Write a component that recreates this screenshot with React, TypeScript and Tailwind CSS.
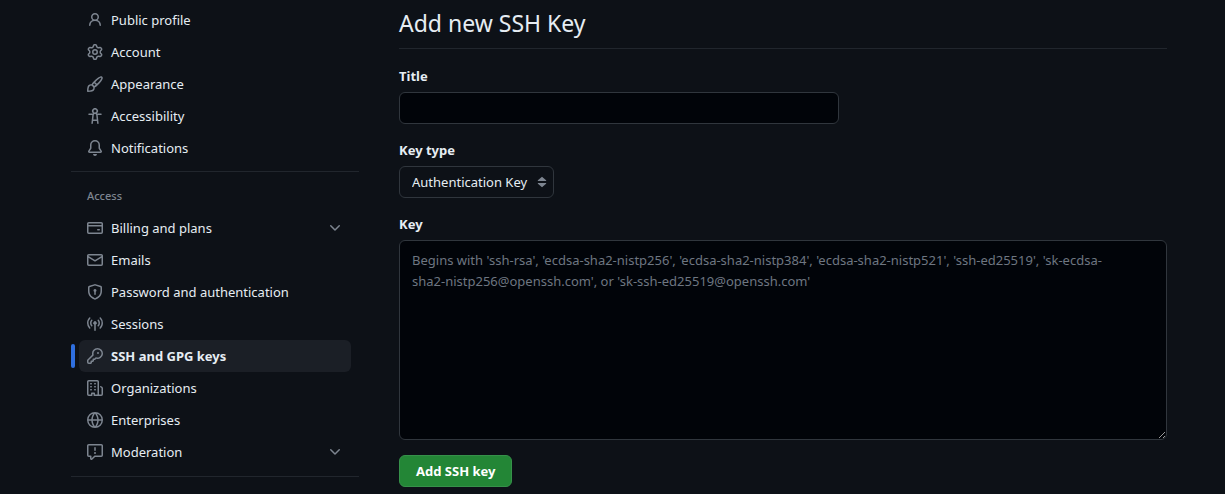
import type { ReactNode } from "react";

const paths = {
  person:
    "M10.561 8.073a6.005 6.005 0 0 1 3.432 5.142.75.75 0 1 1-1.498.07 4.5 4.5 0 0 0-8.99 0 .75.75 0 0 1-1.498-.07 6.004 6.004 0 0 1 3.431-5.142 3.999 3.999 0 1 1 5.123 0ZM10.5 5a2.5 2.5 0 1 0-5 0 2.5 2.5 0 0 0 5 0Z",
  gear:
    "M8 0a8.2 8.2 0 0 1 .701.031C9.444.095 9.99.645 10.16 1.29l.288 1.107c.018.066.079.158.212.224.231.114.454.243.668.386.123.082.233.09.299.071l1.103-.303c.644-.176 1.392.021 1.82.63.27.385.506.792.704 1.218.315.675.111 1.422-.364 1.891l-.814.806c-.049.048-.098.147-.088.294.016.257.016.515 0 .772-.01.147.038.246.088.294l.814.806c.475.469.679 1.216.364 1.891a7.977 7.977 0 0 1-.704 1.217c-.428.61-1.176.807-1.82.63l-1.102-.302c-.067-.019-.177-.011-.3.071a5.909 5.909 0 0 1-.668.386c-.133.066-.194.158-.211.224l-.29 1.106c-.168.646-.715 1.196-1.458 1.26a8.006 8.006 0 0 1-1.402 0c-.743-.064-1.289-.614-1.458-1.26l-.289-1.106c-.018-.066-.079-.158-.212-.224a5.738 5.738 0 0 1-.668-.386c-.123-.082-.233-.09-.299-.071l-1.103.303c-.644.176-1.392-.021-1.82-.63a8.12 8.12 0 0 1-.704-1.218c-.315-.675-.111-1.422.363-1.891l.815-.806c.05-.048.098-.147.088-.294a6.214 6.214 0 0 1 0-.772c.01-.147-.038-.246-.088-.294l-.815-.806C.635 6.045.431 5.298.746 4.623a7.92 7.92 0 0 1 .704-1.217c.428-.61 1.176-.807 1.82-.63l1.102.302c.067.019.177.011.3-.071.214-.143.437-.272.668-.386.133-.066.194-.158.211-.224l.29-1.106C6.009.645 6.556.095 7.299.03 7.53.01 7.764 0 8 0Zm-.571 1.525c-.036.003-.108.036-.137.146l-.289 1.105c-.147.561-.549.967-.998 1.189-.173.086-.34.183-.5.29-.417.278-.97.423-1.529.27l-1.103-.303c-.109-.03-.175.016-.195.045-.22.312-.412.644-.573.99-.014.031-.021.11.059.19l.815.806c.411.406.562.957.53 1.456a4.709 4.709 0 0 0 0 .582c.032.499-.119 1.05-.53 1.456l-.815.806c-.081.08-.073.159-.059.19.162.346.353.677.573.989.02.03.085.076.195.046l1.102-.303c.56-.153 1.113-.008 1.53.27.161.107.328.204.501.29.447.222.85.629.997 1.189l.289 1.105c.029.109.101.143.137.146a6.6 6.6 0 0 0 1.142 0c.036-.003.108-.036.137-.146l.289-1.105c.147-.561.549-.967.998-1.189.173-.086.34-.183.5-.29.417-.278.97-.423 1.529-.27l1.103.303c.109.029.175-.016.195-.045.22-.313.411-.644.573-.99.014-.031.021-.11-.059-.19l-.815-.806c-.411-.406-.562-.957-.53-1.456a4.709 4.709 0 0 0 0-.582c-.032-.499.119-1.05.53-1.456l.815-.806c.081-.08.073-.159.059-.19a6.464 6.464 0 0 0-.573-.989c-.02-.03-.085-.076-.195-.046l-1.102.303c-.56.153-1.113.008-1.53-.27a4.44 4.44 0 0 0-.501-.29c-.447-.222-.85-.629-.997-1.189l-.289-1.105c-.029-.11-.101-.143-.137-.146a6.6 6.6 0 0 0-1.142 0ZM11 8a3 3 0 1 1-6 0 3 3 0 0 1 6 0ZM9.5 8a1.5 1.5 0 1 0-3.001.001A1.5 1.5 0 0 0 9.5 8Z",
  paintbrush:
    "M11.134 1.535c.7-.509 1.416-.942 2.076-1.155.649-.21 1.463-.267 2.069.34.603.601.568 1.411.368 2.07-.202.668-.624 1.39-1.125 2.096-1.011 1.424-2.496 2.987-3.775 4.249-1.098 1.084-2.132 1.839-3.04 2.3a3.744 3.744 0 0 1-1.055 3.217c-.431.431-1.065.691-1.657.861-.614.177-1.294.287-1.914.357A21.151 21.151 0 0 1 .797 16H.743l.007-.75H.749L.742 16a.75.75 0 0 1-.743-.742l.743-.008-.742.007v-.054a21.25 21.25 0 0 1 .13-2.284c.067-.647.187-1.287.358-1.914.17-.591.43-1.226.86-1.657a3.746 3.746 0 0 1 3.227-1.054c.466-.893 1.225-1.907 2.314-2.982 1.271-1.255 2.833-2.75 4.245-3.777ZM1.62 13.089c-.051.464-.086.929-.104 1.395.466-.018.932-.053 1.396-.104a10.511 10.511 0 0 0 1.668-.309c.526-.151.856-.325 1.011-.48a2.25 2.25 0 1 0-3.182-3.182c-.155.155-.329.485-.48 1.01a10.515 10.515 0 0 0-.309 1.67Zm10.396-10.34c-1.224.89-2.605 2.189-3.822 3.384l1.718 1.718c1.21-1.205 2.51-2.597 3.387-3.833.47-.662.78-1.227.912-1.662.134-.444.032-.551.009-.575h-.001V1.78c-.014-.014-.113-.113-.548.027-.432.14-.995.462-1.655.942Zm-4.832 7.266-.001.001a9.859 9.859 0 0 0 1.63-1.142L7.155 7.216a9.7 9.7 0 0 0-1.161 1.607c.482.302.889.71 1.19 1.192Z",
  accessibility:
    "M9.923 5.302c.063.063.122.129.178.198H14A.75.75 0 0 1 14 7h-3.3l.578 5.163.362 2.997a.75.75 0 0 1-1.49.18L9.868 13H6.132l-.282 2.34a.75.75 0 0 1-1.49-.18l.362-2.997L5.3 7H2a.75.75 0 0 1 0-1.5h3.9a2.54 2.54 0 0 1 .176-.198 3 3 0 1 1 3.847 0ZM9.2 7.073h-.001a1.206 1.206 0 0 0-2.398 0L6.305 11.5h3.39ZM9.5 3a1.5 1.5 0 1 0-3.001.001A1.5 1.5 0 0 0 9.5 3Z",
  bell:
    "M8 16a2 2 0 0 0 1.985-1.75c.017-.137-.097-.25-.235-.25h-3.5c-.138 0-.252.113-.235.25A2 2 0 0 0 8 16ZM3 5a5 5 0 0 1 10 0v2.947c0 .05.015.098.042.139l1.703 2.555A1.519 1.519 0 0 1 13.482 13H2.518a1.516 1.516 0 0 1-1.263-2.36l1.703-2.554A.255.255 0 0 0 3 7.947Zm5-3.5A3.5 3.5 0 0 0 4.5 5v2.947c0 .346-.102.683-.294.97l-1.703 2.556a.017.017 0 0 0-.003.01l.001.006c0 .002.002.004.004.006l.006.004.007.001h10.964l.007-.001.006-.004.004-.006.001-.007a.017.017 0 0 0-.003-.01l-1.703-2.554a1.745 1.745 0 0 1-.294-.97V5A3.5 3.5 0 0 0 8 1.5Z",
  creditCard:
    "M10.75 9a.75.75 0 0 0 0 1.5h1.5a.75.75 0 0 0 0-1.5h-1.5ZM0 3.75C0 2.784.784 2 1.75 2h12.5c.966 0 1.75.784 1.75 1.75v8.5A1.75 1.75 0 0 1 14.25 14H1.75A1.75 1.75 0 0 1 0 12.25ZM14.5 6.5h-13v5.75c0 .138.112.25.25.25h12.5a.25.25 0 0 0 .25-.25Zm0-2.75a.25.25 0 0 0-.25-.25H1.75a.25.25 0 0 0-.25.25V5h13Z",
  mail:
    "M1.75 2h12.5c.966 0 1.75.784 1.75 1.75v8.5A1.75 1.75 0 0 1 14.25 14H1.75A1.75 1.75 0 0 1 0 12.25v-8.5C0 2.784.784 2 1.75 2ZM1.5 12.251c0 .138.112.25.25.25h12.5a.25.25 0 0 0 .25-.25V5.809L8.38 9.397a.75.75 0 0 1-.76 0L1.5 5.809v6.442Zm13-8.181v-.32a.25.25 0 0 0-.25-.25H1.75a.25.25 0 0 0-.25.25v.32L8 7.88Z",
  shieldLock:
    "m8.533.133 5.25 1.68A1.75 1.75 0 0 1 15 3.48V7c0 1.566-.32 3.182-1.303 4.682-.983 1.498-2.585 2.813-5.032 3.855a1.697 1.697 0 0 1-1.33 0c-2.447-1.042-4.049-2.357-5.032-3.855C1.32 10.182 1 8.566 1 7V3.48a1.75 1.75 0 0 1 1.217-1.667l5.25-1.68a1.748 1.748 0 0 1 1.066 0Zm-.61 1.429.001.001-5.25 1.68a.251.251 0 0 0-.174.237V7c0 1.36.275 2.666 1.057 3.859.784 1.194 2.121 2.342 4.366 3.298a.196.196 0 0 0 .154 0c2.245-.957 3.582-2.103 4.366-3.297C13.225 9.666 13.5 8.358 13.5 7V3.48a.25.25 0 0 0-.174-.238l-5.25-1.68a.25.25 0 0 0-.153 0ZM9.5 6.5c0 .536-.286 1.032-.75 1.3v2.45a.75.75 0 0 1-1.5 0V7.8A1.5 1.5 0 1 1 9.5 6.5Z",
  broadcast:
    "M8.75 8.582v5.668a.75.75 0 0 1-1.5 0V8.582a1.75 1.75 0 1 1 1.5 0Zm3.983-7.125a.75.75 0 0 1 1.06.026A7.976 7.976 0 0 1 16 7c0 2.139-.84 4.083-2.207 5.517a.75.75 0 1 1-1.086-1.034A6.474 6.474 0 0 0 14.5 7a6.474 6.474 0 0 0-1.793-4.483.75.75 0 0 1 .026-1.06Zm-9.466 0c.3.286.312.76.026 1.06A6.474 6.474 0 0 0 1.5 7a6.47 6.47 0 0 0 1.793 4.483.75.75 0 0 1-1.086 1.034A7.973 7.973 0 0 1 0 7c0-2.139.84-4.083 2.207-5.517a.75.75 0 0 1 1.06-.026Zm8.556 2.321A4.988 4.988 0 0 1 13 7a4.988 4.988 0 0 1-1.177 3.222.75.75 0 1 1-1.146-.967A3.487 3.487 0 0 0 11.5 7c0-.86-.309-1.645-.823-2.255a.75.75 0 0 1 1.146-.967Zm-6.492.958A3.48 3.48 0 0 0 4.5 7a3.48 3.48 0 0 0 .823 2.255.75.75 0 0 1-1.146.967A4.981 4.981 0 0 1 3 7a4.982 4.982 0 0 1 1.188-3.236.75.75 0 1 1 1.143.972Z",
  key:
    "M10.5 0a5.499 5.499 0 1 1-1.288 10.848l-.932.932a.749.749 0 0 1-.53.22H7v.75a.749.749 0 0 1-.22.53l-.5.5a.749.749 0 0 1-.53.22H5v.75a.749.749 0 0 1-.22.53l-.5.5a.749.749 0 0 1-.53.22h-2A1.75 1.75 0 0 1 0 14.25v-2c0-.199.079-.389.22-.53l4.932-4.932A5.5 5.5 0 0 1 10.5 0Zm-4 5.5c-.001.431.069.86.205 1.269a.75.75 0 0 1-.181.768L1.5 12.56v1.69c0 .138.112.25.25.25h1.69l.06-.06v-1.19a.75.75 0 0 1 .75-.75h1.19l.06-.06v-1.19a.75.75 0 0 1 .75-.75h1.19l1.023-1.025a.75.75 0 0 1 .768-.18A4 4 0 1 0 6.5 5.5ZM11 6a1 1 0 1 1 0-2 1 1 0 0 1 0 2Z",
  organization:
    "M1.75 16A1.75 1.75 0 0 1 0 14.25V1.75C0 .784.784 0 1.75 0h8.5C11.216 0 12 .784 12 1.75v12.5c0 .085-.006.168-.018.25h2.268a.25.25 0 0 0 .25-.25V8.285a.25.25 0 0 0-.111-.208l-1.055-.703a.749.749 0 1 1 .832-1.248l1.055.703c.487.325.779.871.779 1.456v5.965A1.75 1.75 0 0 1 14.25 16h-3.5a.766.766 0 0 1-.197-.026c-.099.017-.2.026-.303.026h-3a.75.75 0 0 1-.75-.75V14h-1v1.25a.75.75 0 0 1-.75.75Zm-.25-1.75c0 .138.112.25.25.25H4v-1.25a.75.75 0 0 1 .75-.75h2.5a.75.75 0 0 1 .75.75v1.25h2.25a.25.25 0 0 0 .25-.25V1.75a.25.25 0 0 0-.25-.25h-8.5a.25.25 0 0 0-.25.25ZM3.75 6h.5a.75.75 0 0 1 0 1.5h-.5a.75.75 0 0 1 0-1.5ZM3 3.75A.75.75 0 0 1 3.75 3h.5a.75.75 0 0 1 0 1.5h-.5A.75.75 0 0 1 3 3.75Zm4 3A.75.75 0 0 1 7.75 6h.5a.75.75 0 0 1 0 1.5h-.5A.75.75 0 0 1 7 6.75ZM7.75 3h.5a.75.75 0 0 1 0 1.5h-.5a.75.75 0 0 1 0-1.5ZM3 9.75A.75.75 0 0 1 3.75 9h.5a.75.75 0 0 1 0 1.5h-.5A.75.75 0 0 1 3 9.75ZM7.75 9h.5a.75.75 0 0 1 0 1.5h-.5a.75.75 0 0 1 0-1.5Z",
  globe:
    "M8 0a8 8 0 1 1 0 16A8 8 0 0 1 8 0ZM5.78 8.75a9.64 9.64 0 0 0 1.363 4.177c.255.426.542.832.857 1.215.245-.296.551-.705.857-1.215A9.64 9.64 0 0 0 10.22 8.75Zm4.44-1.5a9.64 9.64 0 0 0-1.363-4.177c-.307-.51-.612-.919-.857-1.215a9.927 9.927 0 0 0-.857 1.215A9.64 9.64 0 0 0 5.78 7.25Zm-5.944 1.5H1.543a6.507 6.507 0 0 0 4.666 5.5c-.123-.181-.24-.365-.352-.552-.715-1.192-1.437-2.874-1.581-4.948Zm-2.733-1.5h2.733c.144-2.074.866-3.756 1.58-4.948.12-.197.237-.381.353-.552a6.507 6.507 0 0 0-4.666 5.5Zm10.181 1.5c-.144 2.074-.866 3.756-1.58 4.948-.12.197-.237.381-.353.552a6.507 6.507 0 0 0 4.666-5.5Zm2.733-1.5a6.507 6.507 0 0 0-4.666-5.5c.123.181.24.365.353.552.714 1.192 1.436 2.874 1.58 4.948Z",
  report:
    "M0 1.75C0 .784.784 0 1.75 0h12.5C15.216 0 16 .784 16 1.75v9.5A1.75 1.75 0 0 1 14.25 13H8.06l-2.573 2.573A1.458 1.458 0 0 1 3 14.543V13H1.75A1.75 1.75 0 0 1 0 11.25Zm1.75-.25a.25.25 0 0 0-.25.25v9.5c0 .138.112.25.25.25h2a.75.75 0 0 1 .75.75v2.19l2.72-2.72a.749.749 0 0 1 .53-.22h6.5a.25.25 0 0 0 .25-.25v-9.5a.25.25 0 0 0-.25-.25Zm7 2.25v2.5a.75.75 0 0 1-1.5 0v-2.5a.75.75 0 0 1 1.5 0ZM9 9a1 1 0 1 1-2 0 1 1 0 0 1 2 0Z",
  chevronDown:
    "M12.78 5.22a.749.749 0 0 1 0 1.06l-4.25 4.25a.749.749 0 0 1-1.06 0L3.22 6.28a.749.749 0 1 1 1.06-1.06L8 8.939l3.72-3.719a.749.749 0 0 1 1.06 0Z",
  updown:
    "M4.2 9h7.6a.4.4 0 0 1 .3.7L8.3 13a.45.45 0 0 1-.6 0L3.9 9.7a.4.4 0 0 1 .3-.7ZM4.2 7h7.6a.4.4 0 0 0 .3-.7L8.3 3a.45.45 0 0 0-.6 0L3.9 6.3a.4.4 0 0 0 .3.7Z",
};

type IconName = keyof typeof paths;

function Icon({ name, className = "" }: { name: IconName; className?: string }) {
  return (
    <svg viewBox="0 0 16 16" aria-hidden="true" className={`size-4 shrink-0 fill-[#7d8590] ${className}`}>
      <path d={paths[name]} />
    </svg>
  );
}

interface Item {
  label: string;
  icon: IconName;
  expandable?: boolean;
  current?: boolean;
}

const profileItems: Item[] = [
  { label: "Public profile", icon: "person" },
  { label: "Account", icon: "gear" },
  { label: "Appearance", icon: "paintbrush" },
  { label: "Accessibility", icon: "accessibility" },
  { label: "Notifications", icon: "bell" },
];

const accessItems: Item[] = [
  { label: "Billing and plans", icon: "creditCard", expandable: true },
  { label: "Emails", icon: "mail" },
  { label: "Password and authentication", icon: "shieldLock" },
  { label: "Sessions", icon: "broadcast" },
  { label: "SSH and GPG keys", icon: "key", current: true },
  { label: "Organizations", icon: "organization" },
  { label: "Enterprises", icon: "globe" },
  { label: "Moderation", icon: "report", expandable: true },
];

const rowClass = "flex h-8 w-full items-center gap-2 rounded-md px-2 text-left";

function NavItem({ item }: { item: Item }) {
  if (item.expandable) {
    return (
      <li className="px-2">
        <button type="button" aria-expanded="false" className={rowClass}>
          <Icon name={item.icon} />
          <span className="grow">{item.label}</span>
          <Icon name="chevronDown" />
        </button>
      </li>
    );
  }
  if (item.current) {
    return (
      <li className="flex items-center gap-1 pr-2">
        <span className="h-6 w-1 shrink-0 rounded-md bg-[#2f6fdf]" />
        <a href="#keys" aria-current="page" className={`${rowClass} bg-[#1b1f26] font-bold`}>
          <Icon name={item.icon} />
          <span>{item.label}</span>
        </a>
      </li>
    );
  }
  return (
    <li className="px-2">
      <a href="#settings" className={rowClass}>
        <Icon name={item.icon} />
        <span>{item.label}</span>
      </a>
    </li>
  );
}

function Field({ id, label, children }: { id: string; label: string; children: ReactNode }) {
  return (
    <div className="flex flex-col items-start gap-1.5">
      <label htmlFor={id} className="leading-5 font-bold">
        {label}
      </label>
      {children}
    </div>
  );
}

export default function App() {
  return (
    <div className="min-h-screen bg-[#0d1117] font-['Noto_Sans','Open_Sans',sans-serif] text-[13px] leading-5 text-[#e6edf3]">
      <div className="flex gap-10 pr-[58px] pl-[71px]">
        <nav aria-label="Settings" className="w-72 shrink-0 pt-1">
          <ul>
            {profileItems.map((item) => (
              <NavItem key={item.label} item={item} />
            ))}
          </ul>
          <hr className="mt-[7px] border-[#21262d]" />
          <h2 className="px-4 pt-4 pb-2 text-[11px] leading-4 font-medium text-[#7d8590]">Access</h2>
          <ul>
            {accessItems.map((item) => (
              <NavItem key={item.label} item={item} />
            ))}
          </ul>
          <hr className="mt-2 border-[#21262d]" />
        </nav>
        <main className="min-w-0 grow pt-[7px]">
          <h1 className="border-b border-[#21262d] pb-[9px] text-[23px] leading-8">Add new SSH Key</h1>
          <form onSubmit={(e) => e.preventDefault()}>
            <div className="flex flex-col gap-4 pt-[17px]">
              <Field id="title" label="Title">
                <input
                  id="title"
                  type="text"
                  className="h-8 w-full max-w-[440px] rounded-md border border-[#30363d] bg-[#010409] px-3 outline-none"
                />
              </Field>
              <Field id="type" label="Key type">
                <div className="grid items-center">
                  <select
                    id="type"
                    className="col-start-1 row-start-1 h-8 appearance-none rounded-md border border-[#30363d] bg-[#0d1117] pr-[25px] pl-3 outline-none"
                  >
                    <option>Authentication Key</option>
                    <option>Signing Key</option>
                  </select>
                  <Icon name="updown" className="pointer-events-none col-start-1 row-start-1 mr-1 justify-self-end" />
                </div>
              </Field>
              <Field id="key" label="Key">
                <textarea
                  id="key"
                  className="h-[200px] w-full resize rounded-md border border-[#30363d] bg-[#010409] py-[9px] pr-10 pl-3 leading-[21px] outline-none placeholder:text-[#6e7681]"
                  placeholder="Begins with 'ssh-rsa', 'ecdsa-sha2-nistp256', 'ecdsa-sha2-nistp384', 'ecdsa-sha2-nistp521', 'ssh-ed25519', 'sk-ecdsa-sha2-nistp256@openssh.com', or 'sk-ssh-ed25519@openssh.com'"
                />
              </Field>
            </div>
            <button
              type="submit"
              className="mt-[15px] h-8 rounded-md border border-[#36914a] bg-[#238636] px-4 font-bold text-white"
            >
              Add SSH key
            </button>
          </form>
        </main>
      </div>
    </div>
  );
}
